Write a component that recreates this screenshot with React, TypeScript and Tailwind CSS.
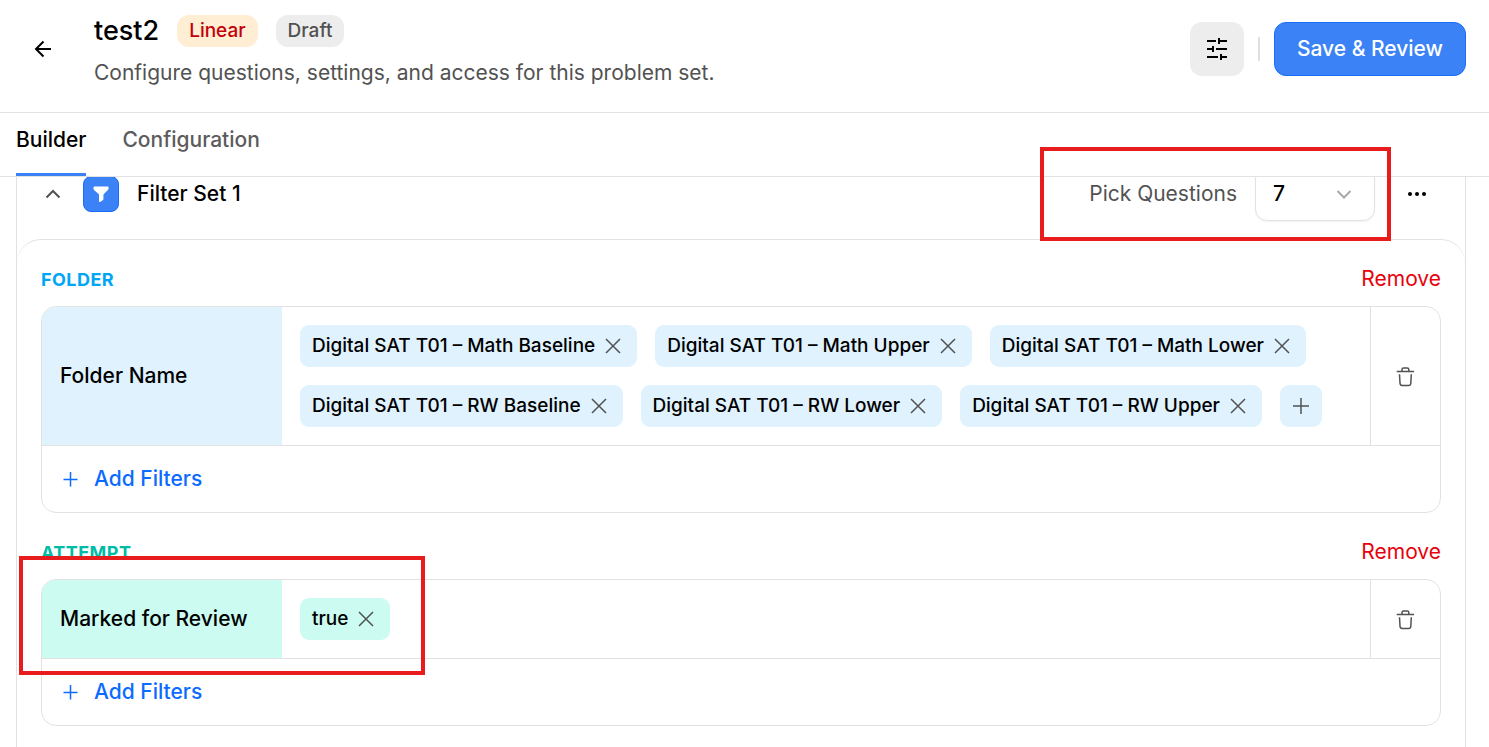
import { useState } from 'react';
import type { ReactNode } from 'react';

type Tone = 'sky' | 'teal';

interface FilterGroup {
  id: string;
  title: string;
  field: string;
  tone: Tone;
  values: string[];
  multiple: boolean;
}

const TONES: Record<Tone, { heading: string; fill: string }> = {
  sky: { heading: 'text-sky-500', fill: 'bg-sky-100' },
  teal: { heading: 'text-teal-500', fill: 'bg-teal-100' },
};

const INITIAL_GROUPS: FilterGroup[] = [
  {
    id: 'folder',
    title: 'FOLDER',
    field: 'Folder Name',
    tone: 'sky',
    values: [
      'Digital SAT T01 – Math Baseline',
      'Digital SAT T01 – Math Upper',
      'Digital SAT T01 – Math Lower',
      'Digital SAT T01 – RW Baseline',
      'Digital SAT T01 – RW Lower',
      'Digital SAT T01 – RW Upper',
    ],
    multiple: true,
  },
  {
    id: 'attempt',
    title: 'ATTEMPT',
    field: 'Marked for Review',
    tone: 'teal',
    values: ['true'],
    multiple: false,
  },
];

interface IconProps {
  className?: string;
  strokeWidth?: number;
  children: ReactNode;
}

function Icon({ className = '', strokeWidth = 1.5, children }: IconProps) {
  return (
    <svg
      viewBox="0 0 24 24"
      fill="none"
      stroke="currentColor"
      strokeWidth={strokeWidth}
      aria-hidden="true"
      className={`w-6 h-6 shrink-0 ${className}`}
    >
      {children}
    </svg>
  );
}

const CloseIcon = () => (
  <Icon className="text-[#525252]">
    <path d="M5 5l14 14M19 5L5 19" />
  </Icon>
);

const PlusIcon = () => (
  <Icon>
    <path d="M12.5 5v14.5M5.5 12.5h14" />
  </Icon>
);

const TrashIcon = () => (
  <Icon className="text-[#525252]">
    <path d="M2.7 7.6h17.4M8 7.300V5.500c0-1 .6-1.600 1.600-1.600h3.600c1 0 1.600.6 1.600 1.600v1.800" />
    <path d="M5.500 10.200l.5 9.100c.1 1.500.8 2.200 2.200 2.200h6.400c1.400 0 2.100-.7 2.200-2.200l.5-9.100" />
  </Icon>
);

function Header() {
  return (
    <header className="flex h-[113px] items-center justify-between border-b border-[#e2e2e2] pb-3.5 pl-6 pr-[23px]">
      <div className="flex items-center gap-[34px]">
        <button type="button" aria-label="Back" className="flex w-9 justify-center">
          <Icon strokeWidth={2}>
            <path d="M21 12H6.5M13.5 4.5L6 12l7.5 7.5" />
          </Icon>
        </button>
        <div className="flex flex-col gap-1.5">
          <div className="flex h-[42px] items-center gap-[18px]">
            <h1 className="text-[27px] font-medium">test2</h1>
            <span className="rounded-xl bg-orange-100 px-3 text-[19px] font-medium leading-8 text-red-700">
              Linear
            </span>
            <span className="rounded-xl bg-[#ededed] px-3 text-[19px] font-medium leading-8 text-[#525252]">
              Draft
            </span>
          </div>
          <p className="text-[21px] leading-[30px] text-[#525252]">
            Configure questions, settings, and access for this problem set.
          </p>
        </div>
      </div>

      <div className="flex items-center gap-3.5">
        <button
          type="button"
          aria-label="Settings"
          className="flex h-[54px] w-[54px] items-center justify-center rounded-xl bg-[#ededed]"
        >
          <Icon strokeWidth={2}>
            <path d="M2 4h9M13 4h9M14 1v6M2 12h7M8 9v6M11 12h11M2 20h11M15 20h7M16 17v6" />
          </Icon>
        </button>
        <div className="h-6 w-0.5 bg-[#e2dfdc]" />
        <button
          type="button"
          className="h-[54px] rounded-xl border border-[#1a6df5] bg-[#3b82f6] px-[22px] text-[21px] font-medium text-white"
        >
          Save &amp; Review
        </button>
      </div>
    </header>
  );
}

function Tabs() {
  const [active, setActive] = useState('Builder');

  return (
    <nav className="relative z-10 flex h-16 gap-9 border-b border-[#e2e2e2] bg-white px-4 text-[21px]">
      {['Builder', 'Configuration'].map((tab) => (
        <button
          key={tab}
          type="button"
          onClick={() => setActive(tab)}
          className={`h-[63px] border-b-[3px] pb-1.5 font-medium ${
            active === tab ? 'border-[#3b82f6] text-black' : 'border-transparent text-[#5c5c5c]'
          }`}
        >
          {tab}
        </button>
      ))}
    </nav>
  );
}

function FilterSetHeader() {
  const [count, setCount] = useState('7');

  return (
    <div className="flex h-[90px] items-center justify-between pl-[18px] pr-[30px] text-[21px]">
      <div className="flex items-center">
        <button type="button" aria-label="Collapse" className="mr-3 flex w-9 justify-center text-[#525252]">
          <Icon strokeWidth={2}>
            <path d="M5.5 15.5L12 9l6.5 6.5" />
          </Icon>
        </button>
        <span className="mr-[18px] flex h-9 w-9 items-center justify-center rounded-lg border border-[#1a6df5] bg-[#3b82f6] text-white">
          <svg viewBox="0 0 24 24" fill="currentColor" aria-hidden="true" className="h-6 w-6">
            <path d="M5.3 4.500h13.400c.6 0 .9.300.9.900v1.200c0 .5-.2.900-.5 1.200l-4.200 4.300c-.3.300-.5.800-.5 1.300v3.800c0 .5-.2.900-.7 1.100l-2.600 1.600c-.6.300-1.100 0-1.100-.6v-6c0-.5-.1-.9-.4-1.200L5 7.900c-.3-.4-.5-.8-.5-1.200V5.400c0-.6.300-.9.800-.9z" />
          </svg>
        </span>
        <h2 className="font-medium">Filter Set 1</h2>
      </div>

      <div className="flex items-center">
        <label htmlFor="pick-questions" className="mr-[18px] text-[#525252]">
          Pick Questions
        </label>
        <div className="relative mr-6">
          <select
            id="pick-questions"
            value={count}
            onChange={(e) => setCount(e.target.value)}
            className="h-[54px] w-[120px] appearance-none rounded-xl border border-[#e2e2e2] bg-white px-[17px] font-medium shadow-xs"
          >
            {['5', '6', '7', '8', '9', '10'].map((n) => (
              <option key={n}>{n}</option>
            ))}
          </select>
          <span className="pointer-events-none absolute inset-y-0 right-[19px] flex items-center text-[#a8a8a8]">
            <Icon strokeWidth={2}>
              <path d="M5.5 9l6.5 6.5L18.5 9" />
            </Icon>
          </span>
        </div>
        <button type="button" aria-label="More options" className="flex w-9 justify-center">
          <svg viewBox="0 0 24 24" fill="currentColor" aria-hidden="true" className="h-6 w-6">
            <circle cx="5" cy="12" r="2" />
            <circle cx="12" cy="12" r="2" />
            <circle cx="19" cy="12" r="2" />
          </svg>
        </button>
      </div>
    </div>
  );
}

interface FilterSectionProps {
  group: FilterGroup;
  onRemoveValue: (value: string) => void;
  onRemove: () => void;
}

function FilterSection({ group, onRemoveValue, onRemove }: FilterSectionProps) {
  const tone = TONES[group.tone];

  return (
    <section>
      <div className="mb-3 flex h-[30px] items-center justify-between">
        <h3 className={`text-[18px] font-bold tracking-wide ${tone.heading}`}>{group.title}</h3>
        <button type="button" onClick={onRemove} className="text-[21px] text-red-600">
          Remove
        </button>
      </div>

      <div className="overflow-hidden rounded-[15px] border border-[#e2e2e2]">
        <div className="flex border-b border-[#e2e2e2]">
          <div className={`flex w-60 shrink-0 items-center px-[18px] text-[21px] font-medium ${tone.fill}`}>
            {group.field}
          </div>
          <div className="flex flex-1 flex-wrap gap-[18px] p-[18px]">
            {group.values.map((value) => (
              <span
                key={value}
                className={`flex h-[42px] items-center gap-1.5 rounded-[9px] px-3 text-[19px] font-medium ${tone.fill}`}
              >
                {value}
                <button type="button" aria-label={`Remove ${value}`} onClick={() => onRemoveValue(value)}>
                  <CloseIcon />
                </button>
              </span>
            ))}
            {group.multiple && (
              <button
                type="button"
                aria-label="Add value"
                className={`flex h-[42px] w-[42px] items-center justify-center rounded-[9px] text-[#525252] ${tone.fill}`}
              >
                <Icon>
                  <path d="M12 4v16M4 12h16" />
                </Icon>
              </button>
            )}
          </div>
          <button
            type="button"
            aria-label={`Delete ${group.field}`}
            onClick={onRemove}
            className="flex w-[70px] shrink-0 items-center justify-center border-l border-[#e2e2e2]"
          >
            <TrashIcon />
          </button>
        </div>
        <button
          type="button"
          className="flex h-[66px] items-center gap-3 px-4 text-[21px] font-medium text-[#0b6bff]"
        >
          <PlusIcon />
          Add Filters
        </button>
      </div>
    </section>
  );
}

export default function App() {
  const [groups, setGroups] = useState(INITIAL_GROUPS);

  const removeGroup = (id: string) => setGroups((prev) => prev.filter((g) => g.id !== id));

  const removeValue = (id: string, value: string) =>
    setGroups((prev) =>
      prev.map((g) => (g.id === id ? { ...g, values: g.values.filter((v) => v !== value) } : g))
    );

  return (
    <div className="relative flex h-screen flex-col overflow-hidden bg-white font-['Inter',sans-serif] text-black">
      <Header />
      <Tabs />

      <main className="min-h-0 flex-1 pl-4 pr-[23px]">
        {/* the panel is scrolled a little way under the tab bar */}
        <div className="-mt-7 min-h-[620px] border-x border-[#e2e2e2]">
          <FilterSetHeader />
          <div className="flex flex-col gap-6 rounded-t-3xl border-t border-[#e2e2e2] p-6">
            {groups.map((group) => (
              <FilterSection
                key={group.id}
                group={group}
                onRemove={() => removeGroup(group.id)}
                onRemoveValue={(value) => removeValue(group.id, value)}
              />
            ))}
          </div>
        </div>
      </main>

      {/* callouts */}
      <div className="pointer-events-none absolute right-[98px] top-[147px] z-20 h-[94px] w-[351px] border-4 border-[#e81c1c]" />
      <div className="pointer-events-none absolute left-[19px] top-[556px] z-20 h-[119px] w-[406px] border-4 border-[#e81c1c]" />
    </div>
  );
}
